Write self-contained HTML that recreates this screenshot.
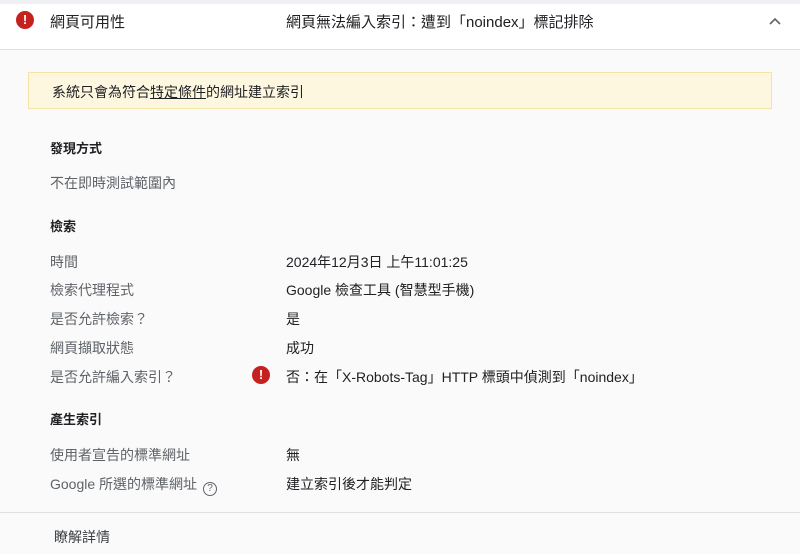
<!DOCTYPE html>
<html><head><meta charset="utf-8"><style>
*{margin:0;padding:0;box-sizing:border-box}
body{width:800px;height:554px;background:#fafafa;font-family:"Liberation Sans","Noto Sans CJK TC",sans-serif;font-size:14px;color:#202124;position:relative;overflow:hidden}
.top{position:absolute;left:0;top:0;width:800px;height:4px;background:#eef0f4}
.hdr{position:absolute;left:0;top:4px;width:800px;height:46px;background:#fff;border-bottom:1px solid #e0e0e0}
.t{position:absolute;white-space:nowrap}
.g{color:#5f6368}
.b{font-weight:bold;font-size:13px}
.err{position:absolute;width:18px;height:18px;border-radius:50%;background:#c5221f;color:#fff;font-size:13px;font-weight:bold;text-align:center;line-height:18px}
.ban{position:absolute;left:28px;top:72px;width:744px;height:37px;background:#fef7e0;border:1px solid #f6e3a8}
.foot{position:absolute;left:0;top:512px;width:800px;height:1px;background:#e0e0e0}
</style></head><body>
<div class="top"></div>
<div class="hdr">
<div class="err" style="left:16px;top:7px">!</div>
<div class="t" style="left:50px;top:7px;font-size:15px">網頁可用性</div>
<div class="t" style="left:286px;top:7px;font-size:15px">網頁無法編入索引：遭到「noindex」標記排除</div>
<svg style="position:absolute;left:768px;top:12px" width="14" height="10" viewBox="0 0 14 10"><path d="M2 8 L7 3 L12 8" stroke="#5f6368" stroke-width="1.6" fill="none"/></svg>
</div>
<div class="ban"><div class="t" style="left:23px;top:9px">系統只會為符合<span style="text-decoration:underline">特定條件</span>的網址建立索引</div></div>
<div class="t b" style="left:50px;top:138px">發現方式</div>
<div class="t g" style="left:50px;top:173px">不在即時測試範圍內</div>
<div class="t b" style="left:50px;top:216px">檢索</div>
<div class="t g" style="left:50px;top:252px">時間</div><div class="t" style="left:286px;top:252px">2024年12月3日 上午11:01:25</div>
<div class="t g" style="left:50px;top:280px">檢索代理程式</div><div class="t" style="left:286px;top:280px">Google 檢查工具 (智慧型手機)</div>
<div class="t g" style="left:50px;top:309px">是否允許檢索？</div><div class="t" style="left:286px;top:309px">是</div>
<div class="t g" style="left:50px;top:338px">網頁擷取狀態</div><div class="t" style="left:286px;top:338px">成功</div>
<div class="t g" style="left:50px;top:367px">是否允許編入索引？</div>
<div class="err" style="left:252px;top:366px">!</div>
<div class="t" style="left:286px;top:367px">否：在「X-Robots-Tag」HTTP 標頭中偵測到「noindex」</div>
<div class="t b" style="left:50px;top:409px">產生索引</div>
<div class="t g" style="left:50px;top:445px">使用者宣告的標準網址</div><div class="t" style="left:286px;top:445px">無</div>
<div class="t g" style="left:50px;top:474px">Google 所選的標準網址<span style="display:inline-block;margin-left:6px;width:14px;height:14px;border:1.3px solid #5f6368;border-radius:50%;font-size:10px;text-align:center;line-height:12px;vertical-align:-2px">?</span></div><div class="t" style="left:286px;top:474px">建立索引後才能判定</div>
<div class="foot"></div>
<div class="t" style="left:54px;top:527px;color:#3c4043">瞭解詳情</div>
</body></html>
